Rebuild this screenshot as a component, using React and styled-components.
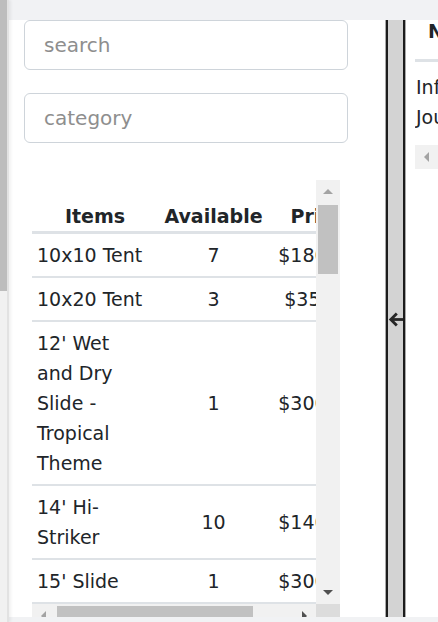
import React from 'react';
import styled, { createGlobalStyle } from 'styled-components';

const GlobalStyle = createGlobalStyle`
  html, body {
    margin: 0;
    padding: 0;
    overflow: hidden;
    background: #fff;
  }
  body {
    font-family: "DejaVu Sans", "Noto Sans", sans-serif;
    color: #212529;
  }
`;

const items = [
  ['10x10 Tent', 7, '$180.00'],
  ['10x20 Tent', 3, '$35.00'],
  ["12' Wet and Dry Slide - Tropical Theme", 1, '$300.00'],
  ["14' Hi-Striker", 10, '$140.00'],
  ["15' Slide", 1, '$300.00'],
  ["16' Water Slide", 2, '$325.00'],
  ["18' Dry Slide", 1, '$350.00'],
  ['20x20 Tent', 2, '$400.00'],
  ['20x30 Tent', 2, '$550.00'],
  ['4-in-1 Combo', 3, '$225.00'],
];

const Screen = styled.div`
  display: flex;
  width: 438px;
  height: 622px;
  overflow: hidden;
`;

const OuterTrack = styled.div`
  position: relative;
  z-index: 1;
  flex: 0 0 9px;
  box-sizing: border-box;
  border-right: 2px solid #e2e2e2;
  background: linear-gradient(#bdbdbd 0 291px, #f1f1f1 291px);
  box-shadow: 2px 0 3px rgba(0, 0, 0, 0.06);
`;

const Frame = styled.div`
  flex: 0 0 auto;
  display: flex;
  flex-direction: column;
`;

const EdgeBar = styled.div`
  flex: 0 0 ${p => p.$h}px;
  background: #f1f2f4;
`;

const Body = styled.div`
  flex: 0 0 597px;
  display: flex;
  overflow: hidden;
`;

const LeftPane = styled.div`
  flex: 0 0 376px;
  box-sizing: border-box;
  padding-left: 15px;
  display: flex;
  flex-direction: column;
  overflow: hidden;
  background: #fff;
`;

const Filters = styled.div`
  display: flex;
  flex-direction: column;
  gap: 23px;
`;

const Field = styled.input`
  width: 324px;
  height: 50px;
  box-sizing: border-box;
  border: 1px solid #ced4da;
  border-radius: 6px;
  padding: 0 19px;
  font-family: "DejaVu Sans", "Noto Sans", sans-serif;
  font-size: 20px;
  color: #212529;
  background: #fff;
  outline: none;
  &::placeholder {
    color: #8e8e8e;
  }
`;

/* scroll box drawn with its own bars: grid of viewport, bars and corner */
const ScrollBox = styled.div`
  flex: 0 0 auto;
  display: grid;
  grid-template-columns: 284px 24px;
  grid-template-rows: 424px 24px;
  margin: 37px 0 0 8px;
`;

const Viewport = styled.div`
  overflow: hidden;
`;

const VBar = styled.div`
  display: flex;
  flex-direction: column;
  background: #f1f1f1;
`;

const HBar = styled.div`
  display: flex;
  background: #f1f1f1;
  width: ${p => (p.$w ? `${p.$w}px` : 'auto')};
`;

const Thumb = styled.div`
  flex: 0 0 ${p => p.$len}px;
  margin: ${p => (p.$vertical ? '1px 2px 0' : '2px 0 2px 1px')};
  background: #c1c1c1;
`;

const Spacer = styled.div`
  flex: 1;
`;

const Corner = styled.div`
  background: #dcdcdc;
`;

const ArrowBtn = styled.div`
  flex: 0 0 24px;
  width: 24px;
  height: 24px;
  display: flex;
  align-items: center;
  justify-content: center;
  &::after {
    content: '';
    width: 0;
    height: 0;
    ${p => {
      const c = p.$dim ? '#a3a3a3' : '#505050';
      switch (p.$dir) {
        case 'up':
          return `border-left: 5px solid transparent; border-right: 5px solid transparent; border-bottom: 5px solid ${c}; margin-top: -1px;`;
        case 'down':
          return `border-left: 5px solid transparent; border-right: 5px solid transparent; border-top: 5px solid ${c};`;
        case 'left':
          return `border-top: 5px solid transparent; border-bottom: 5px solid transparent; border-right: 5px solid ${c}; margin-left: -2px;`;
        default:
          return `border-top: 5px solid transparent; border-bottom: 5px solid transparent; border-left: 5px solid ${c};`;
      }
    }}
  }
`;

const Table = styled.table`
  width: 342px;
  table-layout: fixed;
  border-collapse: separate;
  border-spacing: 0;
  font-size: 19px;
  line-height: 30px;
`;

const Th = styled.th`
  padding: 21px ${p => (p.$price ? 13 : 5)}px 0 5px;
  font-weight: 700;
  text-align: center;
  white-space: nowrap;
  border-bottom: 3px solid #dee2e6;
`;

const Td = styled.td`
  padding: 6px ${p => (p.$name ? 8 : p.$price ? 13 : 5)}px 6px 5px;
  text-align: ${p => (p.$name ? 'left' : 'center')};
  vertical-align: middle;
  white-space: ${p => (p.$price ? 'nowrap' : 'normal')};
  border-bottom: 2px solid #dee2e6;
`;

const Divider = styled.div`
  flex: 0 0 21px;
  box-sizing: border-box;
  border-left: 1px solid #a9a9a9;
  border-right: 1px solid #a9a9a9;
  background: #d3d3d3;
  box-shadow: inset 2px 0 #1c1c1c, inset -2px 0 #1c1c1c;
  display: flex;
  align-items: center;
  justify-content: center;
  padding-top: 1px;
`;

const RightPane = styled.div`
  flex: 0 0 300px;
  box-sizing: border-box;
  padding-left: 9px;
  display: flex;
  flex-direction: column;
  background: #fff;
`;

const RightViewport = styled.div`
  width: 291px;
  overflow: hidden;
`;

const RightTable = styled.table`
  width: 520px;
  table-layout: fixed;
  border-spacing: 0;
  font-size: 19px;
`;

const RTh = styled.th`
  padding: 0 5px 17px 13px;
  line-height: 22px;
  font-weight: 700;
  text-align: left;
  border-bottom: 3px solid #dee2e6;
`;

const RTd = styled.td`
  padding: 10px 5px 13px 1px;
  line-height: 30px;
  vertical-align: top;
`;

const ArrowLeft = () => (
  <svg width="15" height="17" viewBox="0 0 15 17" fill="none" stroke="#262626" strokeWidth="2.8">
    <path d="M15 8.5H2.8" />
    <path d="M8.8 2.5 2.8 8.5 8.8 14.5" />
  </svg>
);

export default function App() {
  return (
    <Screen>
      <GlobalStyle />
      <OuterTrack />
      <Frame>
        <EdgeBar $h={20} />
        <Body>
          <LeftPane>
            <Filters>
              <Field placeholder="search" />
              <Field placeholder="category" />
            </Filters>
            <ScrollBox>
              <Viewport>
                <Table>
                  <colgroup>
                    <col style={{ width: 126 }} />
                    <col style={{ width: 111 }} />
                    <col style={{ width: 105 }} />
                  </colgroup>
                  <thead>
                    <tr>
                      <Th>Items</Th>
                      <Th>Available</Th>
                      <Th $price>Price</Th>
                    </tr>
                  </thead>
                  <tbody>
                    {items.map(([name, qty, price]) => (
                      <tr key={name}>
                        <Td $name>{name}</Td>
                        <Td>{qty}</Td>
                        <Td $price>{price}</Td>
                      </tr>
                    ))}
                  </tbody>
                </Table>
              </Viewport>
              <VBar>
                <ArrowBtn $dir="up" $dim />
                <Thumb $vertical $len={69} />
                <Spacer />
                <ArrowBtn $dir="down" />
              </VBar>
              <HBar>
                <ArrowBtn $dir="left" $dim />
                <Thumb $len={196} />
                <Spacer />
                <ArrowBtn $dir="right" />
              </HBar>
              <Corner />
            </ScrollBox>
          </LeftPane>
          <Divider>
            <ArrowLeft />
          </Divider>
          <RightPane>
            <RightViewport>
              <RightTable>
                <colgroup>
                  <col style={{ width: 110 }} />
                  <col style={{ width: 130 }} />
                  <col style={{ width: 120 }} />
                  <col style={{ width: 160 }} />
                </colgroup>
                <thead>
                  <tr>
                    <RTh>Name</RTh>
                    <RTh>Available</RTh>
                    <RTh>Price</RTh>
                    <RTh>Category</RTh>
                  </tr>
                </thead>
                <tbody>
                  <tr>
                    <RTd>Inflatable Jousting</RTd>
                    <RTd>2</RTd>
                    <RTd>$250.00</RTd>
                    <RTd>Games</RTd>
                  </tr>
                </tbody>
              </RightTable>
            </RightViewport>
            <HBar $w={291}>
              <ArrowBtn $dir="left" $dim />
              <Thumb $len={110} />
              <Spacer />
              <ArrowBtn $dir="right" />
            </HBar>
          </RightPane>
        </Body>
        <EdgeBar $h={24} />
      </Frame>
    </Screen>
  );
}
